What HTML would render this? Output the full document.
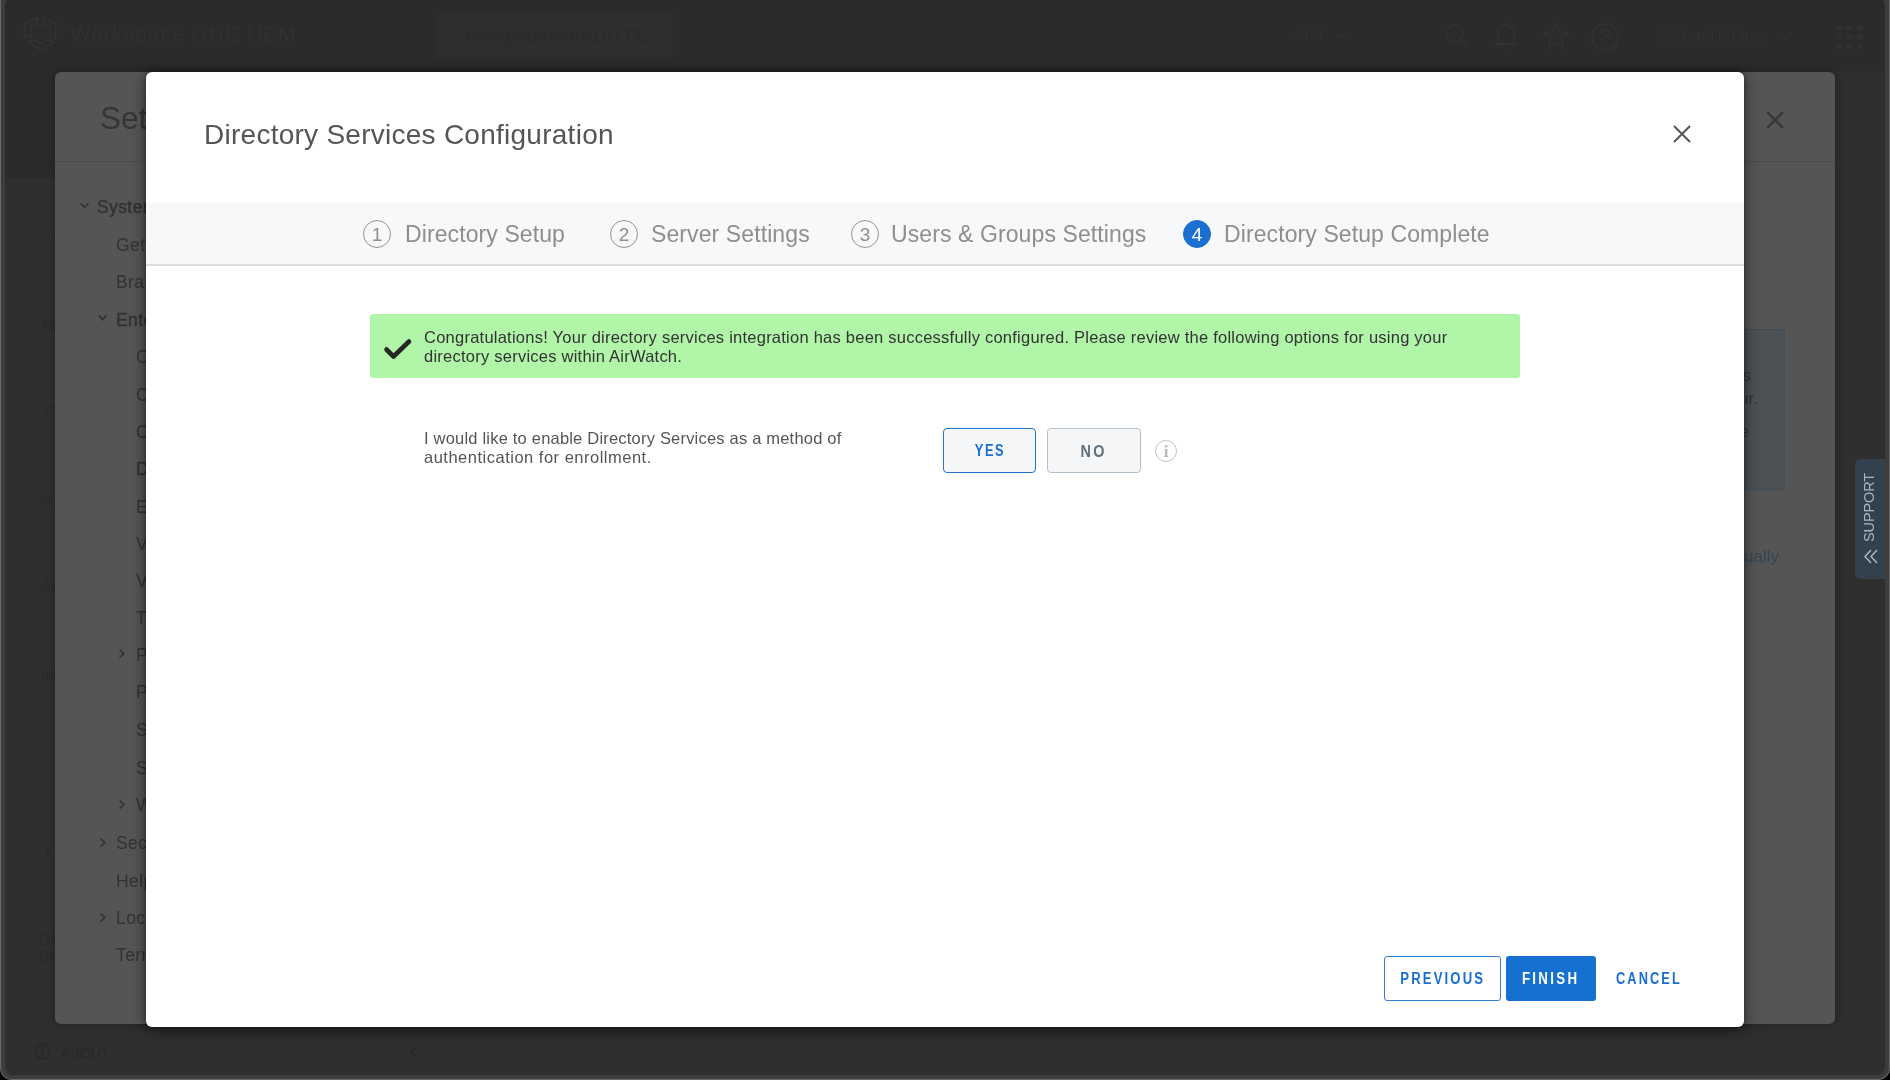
<!DOCTYPE html>
<html><head><meta charset="utf-8">
<style>
*{box-sizing:border-box;margin:0;padding:0}
html,body{width:1890px;height:1080px;overflow:hidden;background:#000;font-family:"Liberation Sans",sans-serif}
.abs{position:absolute}
#win{position:absolute;left:0;top:-20px;width:1890px;height:1100px;border-radius:12px;background:#6a6a6a;overflow:hidden}
#inner{position:absolute;left:1px;top:0;right:1px;bottom:1px;border-radius:11px;background:#3d3d3d;overflow:hidden}
#app{position:absolute;left:4px;top:18px;right:4px;bottom:4px;border-radius:8px;background:#2f2f2f;overflow:hidden}
#hdr{position:absolute;left:0;top:0;right:0;height:73px;background:#2a2b2b}
#hdr2{position:absolute;left:0;top:73px;width:60px;height:107px;background:#2a2b2b}
.faint{position:absolute;color:#303131;white-space:nowrap}
.navt{position:absolute;color:#2b2b2b;font-size:17px;white-space:nowrap}
/* settings panel */
#panel{position:absolute;left:55px;top:72px;width:1780px;height:952px;background:#555;border-radius:6px;overflow:hidden;box-shadow:0 0 10px rgba(0,0,0,.3)}
#panel .title{position:absolute;left:45px;top:28px;font-size:31.5px;color:#333537}
#panel .div{position:absolute;left:0;right:0;top:89px;height:1px;background:#4c4c4c}
.tree{position:absolute;left:0;top:1px}
.tree div{position:absolute;font-size:17.5px;color:#313335;white-space:nowrap;line-height:20px;letter-spacing:0.4px}
.tree .b{-webkit-text-stroke:0.45px #313335}
.chev{position:absolute;width:10px;height:10px}
/* modal */
#modal{position:absolute;left:146px;top:72px;width:1598px;height:955px;background:#fff;border-radius:6px;box-shadow:0 0 4px rgba(0,0,0,.3),0 3px 16px rgba(0,0,0,.5);overflow:hidden}
#mtitle{position:absolute;left:58px;top:47px;font-size:28px;line-height:32px;color:#555;white-space:nowrap;letter-spacing:0.26px}
#steps{position:absolute;left:0;right:0;top:130px;height:64px;background:#f7f8fa;border-bottom:2px solid #dcdcdc}
.circ{position:absolute;top:18px;width:28px;height:28px;border:1.6px solid #939393;border-radius:50%;color:#8e8e8e;font-size:19px;text-align:center;line-height:27px}
.circ.act{background:#1a6fd0;border-color:#1a6fd0;color:#fff}
.stxt{position:absolute;top:18px;font-size:23px;color:#8e8e8e;line-height:28px;white-space:nowrap;letter-spacing:0.1px}
#succ{position:absolute;left:224px;top:242px;width:1150px;height:64px;background:#b0f5a8;border-radius:3px}
#succ .t{position:absolute;left:54px;top:14px;font-size:16.5px;line-height:19px;color:#333;white-space:nowrap;letter-spacing:0.24px}
#q{position:absolute;left:278px;top:357px;font-size:16.5px;line-height:19px;color:#555;white-space:nowrap;letter-spacing:0.3px}
.tog{position:absolute;top:356px;width:93px;height:45px;border-radius:4px;background:#f5f6f8;font-size:16px;font-weight:bold;text-align:center;line-height:43px}
#yes{left:797px;border:1.6px solid #2473d3;color:#1a6ed0;line-height:44px}
#no{left:901px;width:94px;border:1px solid #b3c0cc;color:#5f6f7e;line-height:45px}
.fbtn{position:absolute;top:884px;height:45px;font-size:16px;font-weight:bold;text-align:center;line-height:44px;border-radius:3px}
#prev{left:1238px;width:117px;border:1.3px solid #3380d8;color:#1a6ed0}
#fin{left:1360px;width:90px;background:#1670d0;color:#fff;line-height:46px}
#can{left:1470px;width:66px;color:#1a6ed0}
.sx{display:inline-block}
</style></head><body><div id="root" style="position:absolute;left:0;top:0;width:1890px;height:1080px;will-change:transform">
<div id="win"><div id="inner"><div id="app">
  <div id="hdr"></div><div id="hdr2"></div>
</div></div></div>

<!-- header faint content -->
<svg class="abs" style="left:22px;top:16px" width="38" height="38" viewBox="0 0 38 38" fill="none" stroke="#313232" stroke-width="1.8" stroke-linejoin="round">
  <path d="M15.7 1.4L2.7 7.9V22.2L8.7 19.5V11.6L15.7 7.9Z"/><path d="M21.2 1.4L33.7 7.9V22.2L28.2 19.5V12L21.2 7.9Z"/><path d="M6 26.4L18.5 34.3L31.4 26.4L25.4 23.6L18.5 27.3L11.5 23.6Z"/>
</svg>
<div class="faint" style="left:71px;top:22px;font-size:20.5px;letter-spacing:1.3px">Workspace ONE UEM</div>
<div class="abs" style="left:435px;top:13px;width:238px;height:46px;background:#2e2e2e;border-radius:4px"></div>
<div class="faint" style="left:465px;top:25px;font-size:19px;color:#2b2b2b">dwpg-oofhours101712</div>
<div class="faint" style="left:1294px;top:26px;font-size:16px">Add</div>
<svg class="abs" style="left:1335px;top:32px" width="11" height="8" viewBox="0 0 11 8"><path d="M1 1L5.5 6L10 1" fill="none" stroke="#303131" stroke-width="1.8"/></svg>
<svg class="abs" style="left:1444px;top:23px" width="26" height="26" viewBox="0 0 26 26" fill="none" stroke="#303131" stroke-width="2"><circle cx="10.5" cy="10.5" r="8"/><path d="M16.5 16.5L23.5 23.5"/></svg>
<svg class="abs" style="left:1494px;top:22px" width="26" height="30" viewBox="0 0 26 30" fill="none" stroke="#303131" stroke-width="2"><path d="M4 22V13C4 7 8 3 12 2.5C16 3 20 7 20 13V22Z M1 22H23"/><path d="M10 26H14"/></svg>
<svg class="abs" style="left:1542px;top:22px" width="28" height="28" viewBox="0 0 28 28" fill="none" stroke="#303131" stroke-width="2"><path d="M14 2L17.5 10.5L26 11L19.5 16.5L21.5 25L14 20.5L6.5 25L8.5 16.5L2 11L10.5 10.5Z"/></svg>
<svg class="abs" style="left:1590px;top:22px" width="30" height="30" viewBox="0 0 30 30" fill="none" stroke="#303131" stroke-width="2"><circle cx="15" cy="15" r="13"/><path d="M11 11.5C11 9 13 7.5 15 7.5C17.5 7.5 19 9 19 11C19 14 15 14.5 15 17.5"/><circle cx="15" cy="21.5" r="0.8"/></svg>
<div class="faint" style="left:1656px;top:26px;font-size:16.5px;letter-spacing:0.2px">Michael@Oo...</div>
<svg class="abs" style="left:1780px;top:32px" width="12" height="9" viewBox="0 0 12 9"><path d="M1 1L6 7L11 1" fill="none" stroke="#303131" stroke-width="1.8"/></svg>
<svg class="abs" style="left:1837px;top:25px" width="25" height="24" viewBox="0 0 25 24" fill="#303131">
  <rect x="0" y="0" width="5" height="5"/><rect x="10" y="0" width="5" height="5"/><rect x="20" y="0" width="5" height="5"/>
  <rect x="0" y="9.5" width="5" height="5"/><rect x="10" y="9.5" width="5" height="5"/><rect x="20" y="9.5" width="5" height="5"/>
  <rect x="0" y="19" width="5" height="5"/><rect x="10" y="19" width="5" height="5"/><rect x="20" y="19" width="5" height="5"/>
</svg>

<!-- left faint nav -->
<div class="navt" style="left:40px;top:228px">FR</div>
<div class="navt" style="left:42px;top:316px">M</div>
<div class="navt" style="left:44px;top:403px">C</div>
<div class="navt" style="left:40px;top:493px">RE</div>
<div class="navt" style="left:40px;top:578px">AP</div>
<div class="navt" style="left:40px;top:667px">IN</div>
<div class="navt" style="left:42px;top:842px">Y</div>
<div class="navt" style="left:38px;top:930px">GR</div>
<div class="navt" style="left:38px;top:948px">SE</div>

<!-- about footer -->
<svg class="abs" style="left:34px;top:1043px" width="17" height="17" viewBox="0 0 17 17" fill="none" stroke="#282828" stroke-width="1.5"><circle cx="8.5" cy="8.5" r="7.5"/><path d="M8.5 7V12.5"/><circle cx="8.5" cy="4.8" r="0.5"/></svg>
<div class="faint" style="left:61px;top:1045px;font-size:14px;color:#282828">ABOUT</div>
<svg class="abs" style="left:409px;top:1046px" width="9" height="12" viewBox="0 0 9 12"><path d="M7.5 1L2 6L7.5 11" fill="none" stroke="#282828" stroke-width="2"/></svg>

<!-- support tab -->
<div class="abs" style="left:1855px;top:459px;width:30px;height:120px;background:#33414f;border-radius:6px 0 0 6px"></div>
<div class="abs" style="left:1862px;top:542px;width:70px;height:15px;transform-origin:0 0;transform:rotate(-90deg);color:#aab4bd;font-size:14.5px;line-height:15px;letter-spacing:-0.1px;white-space:nowrap">SUPPORT</div>
<svg class="abs" style="left:1863px;top:549px" width="16" height="16" viewBox="0 0 16 16" fill="none" stroke="#aab4bd" stroke-width="1.5"><path d="M8 1L2 7.5L8 14M14 1L8 7.5L14 14"/></svg>

<div id="panel">
  <div class="title">Settings</div>
  <div class="div"></div>
  <svg class="abs" style="left:1711px;top:39px" width="18" height="18" viewBox="0 0 18 18"><path d="M1 1L17 17M17 1L1 17" stroke="#333537" stroke-width="2"/></svg>
  <div class="tree">
    <svg class="chev" style="left:25px;top:129px" viewBox="0 0 10 10"><path d="M0.8 1.2L4.6 5.6L8.4 1.2" fill="none" stroke="#313335" stroke-width="1.7"/></svg>
    <div class="b" style="left:42px;top:124px">System</div>
    <div style="left:61px;top:162px">Getting Started</div>
    <div style="left:61px;top:199px">Branding</div>
    <svg class="chev" style="left:43px;top:241px" viewBox="0 0 10 10"><path d="M0.8 1.2L4.6 5.6L8.4 1.2" fill="none" stroke="#313335" stroke-width="1.7"/></svg>
    <div class="b" style="left:61px;top:237px">Enterprise Integration</div>
    <div style="left:81px;top:274px">Cloud Connector</div>
    <div style="left:81px;top:312px">Content Gateway</div>
    <div style="left:81px;top:349px">Cloud Services</div>
    <div class="b" style="left:81px;top:386px">Directory Services</div>
    <div style="left:81px;top:424px">Email (SMTP)</div>
    <div style="left:81px;top:461px">VMware Tunnel</div>
    <div style="left:81px;top:498px">VMware Enterprise Systems Connector</div>
    <div style="left:81px;top:535px">Telecom</div>
    <svg class="chev" style="left:63px;top:576px" viewBox="0 0 10 10"><path d="M1.6 0.6L5.8 4.6L1.6 8.6" fill="none" stroke="#313335" stroke-width="1.6"/></svg>
    <div style="left:81px;top:572px">Pull Service Installers</div>
    <div style="left:81px;top:609px">Peripherals</div>
    <div style="left:81px;top:647px">SCEP</div>
    <div style="left:81px;top:685px">SDK</div>
    <svg class="chev" style="left:63px;top:727px" viewBox="0 0 10 10"><path d="M1.6 0.6L5.8 4.6L1.6 8.6" fill="none" stroke="#313335" stroke-width="1.6"/></svg>
    <div style="left:81px;top:722px">Workspace ONE</div>
    <svg class="chev" style="left:44px;top:765px" viewBox="0 0 10 10"><path d="M1.6 0.6L5.8 4.6L1.6 8.6" fill="none" stroke="#313335" stroke-width="1.6"/></svg>
    <div style="left:61px;top:760px">Security</div>
    <div style="left:61px;top:798px">Help</div>
    <svg class="chev" style="left:44px;top:840px" viewBox="0 0 10 10"><path d="M1.6 0.6L5.8 4.6L1.6 8.6" fill="none" stroke="#313335" stroke-width="1.6"/></svg>
    <div style="left:61px;top:835px">Localization</div>
    <div style="left:61px;top:872px">Terms of Use</div>
  </div>
  <!-- right content peeking -->
  <div class="abs" style="left:1000px;top:257px;width:730px;height:161px;border:1px solid #3a4e5e;border-radius:3px;background:#4d5153"></div>
  <div class="abs" style="left:1500px;top:257px;width:230px;height:161px;color:#313335;font-size:17px;line-height:22px;white-space:nowrap;text-align:right">
    <div style="position:absolute;right:34px;top:36px">ures users</div>
    <div style="position:absolute;right:27px;top:59px">your.</div>
    <div style="position:absolute;right:36px;top:92px">use</div>
  </div>
  <div class="abs" style="left:1600px;top:475px;width:124px;text-align:right;color:#344656;font-size:17px;white-space:nowrap">manually</div>
</div>

<div id="modal">
  <div id="mtitle">Directory Services Configuration</div>
  <svg class="abs" style="left:1527px;top:53px" width="18" height="18" viewBox="0 0 18 18"><path d="M1 1L17 17M17 1L1 17" stroke="#555" stroke-width="2"/></svg>
  <div id="steps">
    <div class="circ" style="left:217px">1</div><div class="stxt" style="left:259px">Directory Setup</div>
    <div class="circ" style="left:464px">2</div><div class="stxt" style="left:505px">Server Settings</div>
    <div class="circ" style="left:705px">3</div><div class="stxt" style="left:745px">Users &amp; Groups Settings</div>
    <div class="circ act" style="left:1037px">4</div><div class="stxt" style="left:1078px">Directory Setup Complete</div>
  </div>
  <div id="succ">
    <svg class="abs" style="left:12.5px;top:21.5px" width="30" height="26" viewBox="0 0 30 26"><path d="M3.5 13.5L10.5 20.5L26 5.5" fill="none" stroke="#262626" stroke-width="4.6" stroke-linejoin="round" stroke-linecap="round"/></svg>
    <div class="t">Congratulations! Your directory services integration has been successfully configured. Please review the following options for using your<br>directory services within AirWatch.</div>
  </div>
  <div id="q"><span style="letter-spacing:0.2px">I would like to enable Directory Services as a method of</span><br><span style="letter-spacing:0.5px">authentication for enrollment.</span></div>
  <div id="yes" class="tog"><span class="sx" style="transform:scaleX(0.8);letter-spacing:2px;margin-right:-2px">YES</span></div>
  <div id="no" class="tog"><span class="sx" style="transform:scaleX(0.9);letter-spacing:2.6px;margin-right:-2.6px;position:relative;left:-1.5px">NO</span></div>
  <div class="abs" style="left:1009px;top:368px;width:22px;height:22px;border:1.9px solid #c2c2c2;border-radius:50%"></div>
  <div class="abs" style="left:1009px;top:368px;width:22px;height:22px;color:#b8b8b8;font-family:'Liberation Serif',serif;font-size:17px;font-weight:bold;text-align:center;line-height:23px">i</div>
  <div id="prev" class="fbtn"><span class="sx" style="transform:scaleX(0.82);letter-spacing:2.6px;margin-right:-2.6px;position:relative;left:-1px">PREVIOUS</span></div>
  <div id="fin" class="fbtn"><span class="sx" style="transform:scaleX(0.83);letter-spacing:2.8px;margin-right:-2.8px;position:relative;left:-1.5px">FINISH</span></div>
  <div class="abs" style="left:1470px;top:885px;height:45px;line-height:43px;font-size:16px;font-weight:bold;color:#1a6ed0;white-space:nowrap;transform-origin:0 0;transform:scaleX(0.8);letter-spacing:2.6px">CANCEL</div>
</div>
</div></body></html>
